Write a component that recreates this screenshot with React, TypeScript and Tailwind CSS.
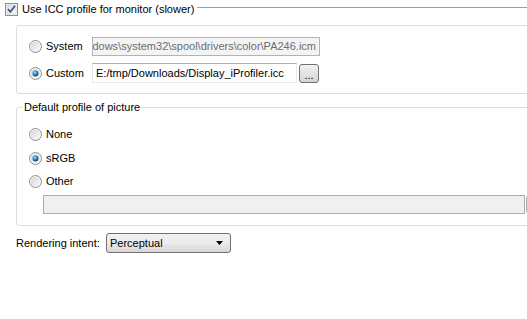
import React from "react";

const Radio = ({ checked = false }: { checked?: boolean }) => (
  <svg width="13" height="13" viewBox="0 0 13 13" className="shrink-0">
    <defs>
      <linearGradient id="rFill" x1="0" y1="0" x2="1" y2="1">
        <stop offset="0" stopColor="#d4d4d4" />
        <stop offset="1" stopColor="#f9f9f9" />
      </linearGradient>
      <radialGradient id="rDot" cx="0.4" cy="0.35" r="0.7">
        <stop offset="0" stopColor="#a8e2ff" />
        <stop offset="0.45" stopColor="#2c8ccc" />
        <stop offset="1" stopColor="#0b3c6a" />
      </radialGradient>
    </defs>
    <circle cx="6.5" cy="6.5" r="6" fill="#f4f4f4" stroke="#8f8f8f" strokeWidth="1" />
    <circle cx="6.5" cy="6.5" r="4.5" fill="url(#rFill)" />
    {checked && <circle cx="6.5" cy="6.5" r="3" fill="url(#rDot)" />}
  </svg>
);

const Checkbox = () => (
  <svg width="13" height="13" viewBox="0 0 13 13" className="shrink-0">
    <defs>
      <linearGradient id="cFill" x1="0" y1="0" x2="1" y2="1">
        <stop offset="0" stopColor="#dcdcdc" />
        <stop offset="1" stopColor="#fbfbfb" />
      </linearGradient>
    </defs>
    <rect x="0.5" y="0.5" width="12" height="12" fill="#f6f6f6" stroke="#8f8f8f" />
    <rect x="2" y="2" width="9" height="9" fill="url(#cFill)" stroke="#cbcbcb" strokeWidth="0.5" />
    <path d="M3 6.2 L5.4 8.8 L10 2.8" fill="none" stroke="#3d5a95" strokeWidth="1.8" />
  </svg>
);

const GroupBox = ({ title, className, children }: { title?: string; className: string; children: React.ReactNode }) => (
  <div className={"relative border border-[#d5dfe5] rounded-[3px] " + className}>
    {title && (
      <span className="absolute left-[6px] -top-[8px] bg-white px-[1px] leading-[14px]">{title}</span>
    )}
    {children}
  </div>
);

export default function App() {
  return (
    <div
      className="w-[527px] h-[319px] overflow-hidden bg-white text-[11px] text-black flex flex-col"
      style={{ fontFamily: "Tahoma, 'Liberation Sans', Arial, sans-serif" }}
    >
      {/* monitor profile toggle */}
      <div className="mt-[3px] h-[13px] flex items-center pl-[5px]">
        <Checkbox />
        <span className="ml-[4px] leading-[13px] whitespace-nowrap">Use ICC profile for monitor (slower)</span>
        <div className="self-start mt-[4px] ml-[3px] flex-1 h-px bg-[#a0a0a0]" />
      </div>

      <GroupBox className="ml-[16px] mt-[9px] w-[620px] h-[69px] shrink-0 pt-[11px] pl-[12px]">
        <div className="flex items-center h-[19px]">
          <div className="w-[63px] flex items-center">
            <Radio />
            <span className="ml-[4px]">System</span>
          </div>
          <div className="w-[228px] h-[19px] border border-[#afb4b8] bg-[#f4f4f4] text-[#6d6d6d] flex items-center pr-[3px] justify-end overflow-hidden whitespace-nowrap">
            dows\system32\spool\drivers\color\PA246.icm
          </div>
        </div>
        <div className="flex items-center h-[20px] mt-[7px]">
          <div className="w-[63px] flex items-center">
            <Radio checked />
            <span className="ml-[4px]">Custom</span>
          </div>
          <div className="w-[205px] h-[20px] border border-[#e3e9ef] border-t-[#abadb3] bg-white flex items-center pl-[3px] overflow-hidden whitespace-nowrap">
            E:/tmp/Downloads/Display_iProfiler.icc
          </div>
          <button className="ml-[2px] w-[20px] h-[19px] rounded-[3px] border border-[#707070] bg-gradient-to-b from-[#f2f2f2] to-[#d4d4d4] flex items-end justify-center pb-[3px] leading-[8px] text-[11px]">
            ...
          </button>
        </div>
      </GroupBox>

      <GroupBox
        title="Default profile of picture"
        className="ml-[16px] mt-[13px] w-[620px] h-[119px] shrink-0 pt-[16px] pl-[12px]"
      >
        <div className="flex flex-col">
          <div className="flex items-center h-[20px]">
            <Radio />
            <span className="ml-[4px]">None</span>
          </div>
          <div className="flex items-center h-[20px] mt-[4px]">
            <Radio checked />
            <span className="ml-[4px]">sRGB</span>
          </div>
          <div className="flex items-center h-[20px] mt-[3px]">
            <Radio />
            <span className="ml-[4px]">Other</span>
          </div>
          <div className="flex mt-[4px] ml-[14px]">
            <div className="w-[482px] h-[19px] border border-[#adadad] bg-[#f0f0f0]" />
            <div className="ml-[1px] w-[22px] h-[19px] rounded-[3px] border border-[#adadad] bg-[#f4f4f4]" />
          </div>
        </div>
      </GroupBox>

      <div className="flex items-center mt-[7px] ml-[16px] h-[20px]">
        <span className="w-[90px] whitespace-nowrap">Rendering intent:</span>
        <div className="w-[125px] h-[20px] rounded-[3px] border border-[#707070] bg-gradient-to-b from-[#f2f2f2] via-[#ebebeb] to-[#d6d6d6] flex items-center pl-[3px] pr-[7px]">
          <span className="flex-1">Perceptual</span>
          <svg width="7" height="4" viewBox="0 0 7 4">
            <path d="M0 0 H7 L3.5 4 Z" fill="#000" />
          </svg>
        </div>
      </div>
    </div>
  );
}
